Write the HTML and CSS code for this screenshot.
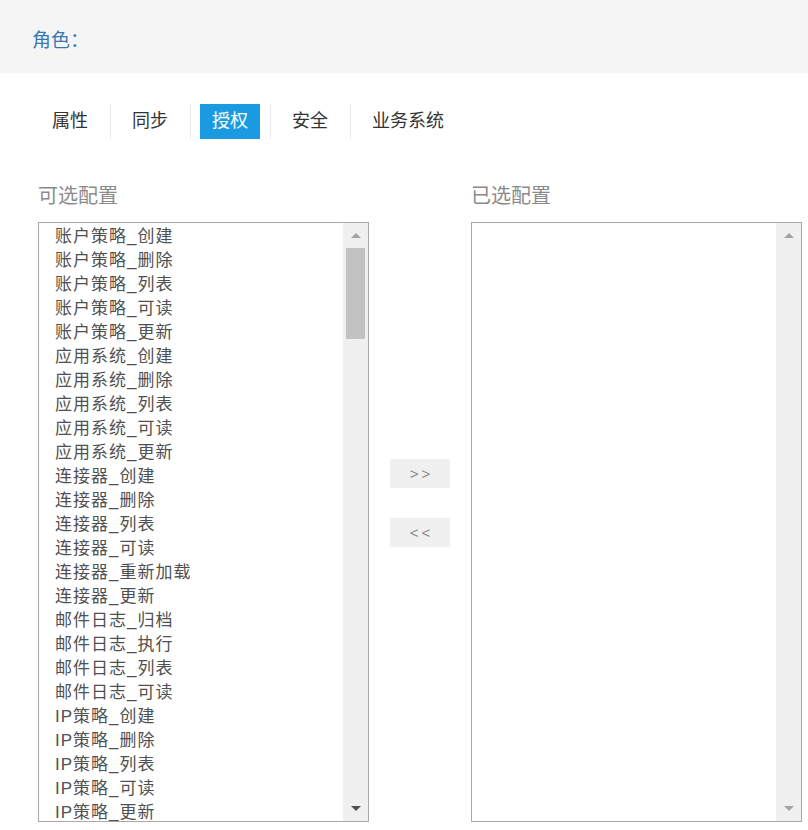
FILE: index.html
```html
<!DOCTYPE html>
<html lang="zh-CN">
<head>
<meta charset="utf-8">
<title>角色授权</title>
<link rel="stylesheet" href="styles.css">
</head>
<body>
<div class="header"><span class="role">角色：</span></div>

<div class="tabs">
  <span class="tab">属性</span><span class="sep"></span>
  <span class="tab">同步</span><span class="sep"></span>
  <span class="tab active">授权</span><span class="sep"></span>
  <span class="tab">安全</span><span class="sep"></span>
  <span class="tab">业务系统</span>
</div>

<div class="transfer">
  <div class="pane">
    <div class="pane-title">可选配置</div>
    <div class="listbox">
      <ul class="options">
        <li>账户策略_创建</li>
        <li>账户策略_删除</li>
        <li>账户策略_列表</li>
        <li>账户策略_可读</li>
        <li>账户策略_更新</li>
        <li>应用系统_创建</li>
        <li>应用系统_删除</li>
        <li>应用系统_列表</li>
        <li>应用系统_可读</li>
        <li>应用系统_更新</li>
        <li>连接器_创建</li>
        <li>连接器_删除</li>
        <li>连接器_列表</li>
        <li>连接器_可读</li>
        <li>连接器_重新加载</li>
        <li>连接器_更新</li>
        <li>邮件日志_归档</li>
        <li>邮件日志_执行</li>
        <li>邮件日志_列表</li>
        <li>邮件日志_可读</li>
        <li>IP策略_创建</li>
        <li>IP策略_删除</li>
        <li>IP策略_列表</li>
        <li>IP策略_可读</li>
        <li>IP策略_更新</li>
      </ul>
      <div class="scrollbar">
        <div class="sb-btn"><span class="arrow-up"></span></div>
        <div class="sb-track"><div class="sb-thumb"></div></div>
        <div class="sb-btn"><span class="arrow-down"></span></div>
      </div>
    </div>
  </div>

  <div class="actions">
    <button class="move-btn" type="button">&gt;&gt;</button>
    <button class="move-btn" type="button">&lt;&lt;</button>
  </div>

  <div class="pane">
    <div class="pane-title">已选配置</div>
    <div class="listbox">
      <ul class="options"></ul>
      <div class="scrollbar">
        <div class="sb-btn"><span class="arrow-up"></span></div>
        <div class="sb-track"></div>
        <div class="sb-btn"><span class="arrow-down light"></span></div>
      </div>
    </div>
  </div>
</div>
</body>
</html>
```

FILE: styles.css
```css
* { box-sizing: border-box; }

html, body {
  margin: 0;
  padding: 0;
  background: #ffffff;
  font-family: "Liberation Sans", "Noto Sans CJK SC", sans-serif;
}

body { width: 808px; height: 830px; overflow: hidden; }

.header {
  height: 73px;
  background: #f5f5f6;
  display: flex;
  align-items: center;
  padding: 3px 0 0 32px;
}

.role {
  font-size: 19px;
  color: #3a78b2;
}

.tabs {
  display: flex;
  align-items: center;
  margin-top: 31px;
  padding-left: 31px;
  height: 35px;
}

.tab {
  height: 35px;
  line-height: 35px;
  padding: 0 12px;
  margin: 0 10px 0 9px;
  font-size: 18px;
  color: #333333;
  white-space: nowrap;
}

.tab.active {
  background: #1a9be1;
  color: #ffffff;
}

.sep {
  width: 1px;
  height: 35px;
  background: #e8e8e8;
}

.transfer {
  display: flex;
  padding-left: 38px;
  margin-top: 43px;
}

.pane { width: 331px; }

.pane-title {
  font-size: 20px;
  line-height: 28px;
  color: #8a8a8a;
  margin-bottom: 12px;
}

.listbox {
  display: flex;
  height: 600px;
  border: 1px solid #a8a8a8;
  background: #ffffff;
}

.options {
  flex: 1;
  list-style: none;
  margin: 0;
  padding: 2px 0 0 16px;
  overflow: hidden;
}

.options li {
  font-size: 17px;
  letter-spacing: 1px;
  line-height: 24px;
  color: #505050;
  white-space: nowrap;
}

.scrollbar {
  width: 25px;
  background: #f0f0f0;
  display: flex;
  flex-direction: column;
}

.sb-btn {
  height: 25px;
  display: flex;
  align-items: center;
  justify-content: center;
}

.sb-track {
  flex: 1;
  padding: 0 3px;
}

.sb-thumb {
  height: 91px;
  background: #c2c2c2;
}

.arrow-up {
  width: 0;
  height: 0;
  border-left: 5px solid transparent;
  border-right: 5px solid transparent;
  border-bottom: 5px solid #a3a3a3;
}

.arrow-down {
  width: 0;
  height: 0;
  border-left: 5px solid transparent;
  border-right: 5px solid transparent;
  border-top: 5px solid #505050;
}

.arrow-down.light { border-top-color: #a3a3a3; }

.actions {
  width: 102px;
  display: flex;
  flex-direction: column;
  align-items: center;
  padding-top: 277px;
  gap: 30px;
}

.move-btn {
  width: 60px;
  height: 29px;
  border: none;
  background: #f0f0f0;
  color: #8a8a8a;
  font-family: "Liberation Sans", sans-serif;
  font-size: 15px;
  letter-spacing: 3px;
  padding: 0 0 0 3px;
  cursor: pointer;
}
```
